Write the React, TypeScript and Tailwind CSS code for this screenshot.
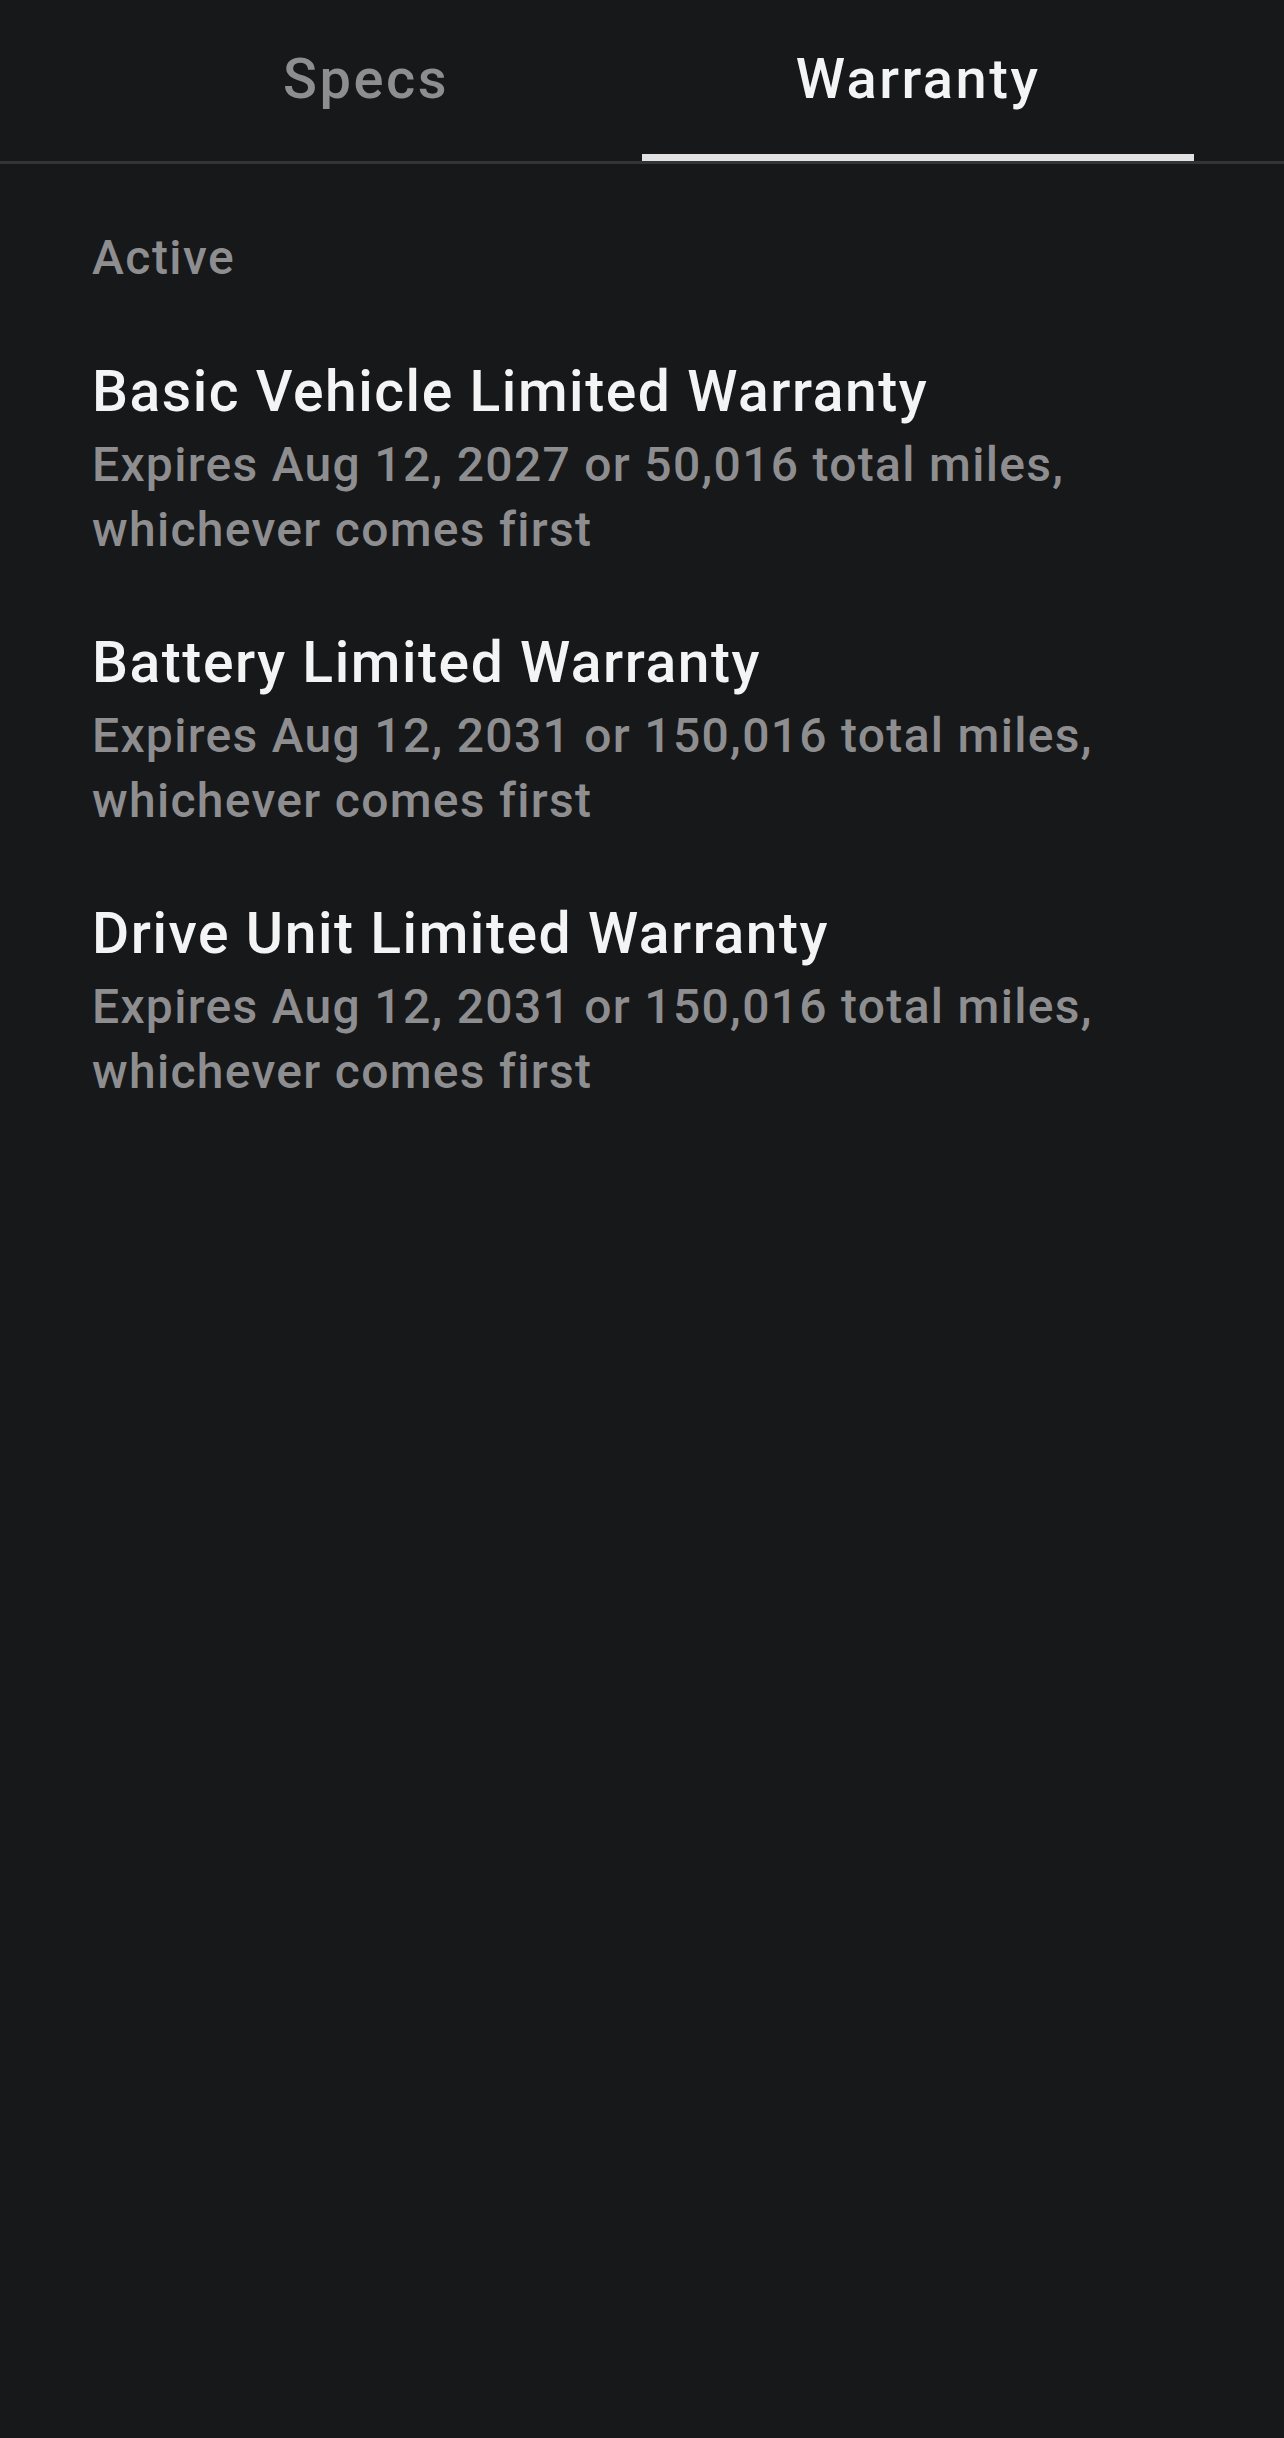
const warranties = [
  {
    title: 'Basic Vehicle Limited Warranty',
    detail: 'Expires Aug 12, 2027 or 50,016 total miles, whichever comes first',
  },
  {
    title: 'Battery Limited Warranty',
    detail: 'Expires Aug 12, 2031 or 150,016 total miles, whichever comes first',
  },
  {
    title: 'Drive Unit Limited Warranty',
    detail: 'Expires Aug 12, 2031 or 150,016 total miles, whichever comes first',
  },
];

function Tab({ label, active }: { label: string; active?: boolean }) {
  return (
    <div className="flex h-[161px] flex-1 flex-col items-center">
      <div
        className={
          'pt-[51px] text-[56px] leading-none font-medium tracking-[2.5px] ' +
          (active ? 'text-[#f4f4f5]' : 'text-[#8e8e90]')
        }
      >
        {label}
      </div>
      <div className="flex-1" />
      <div className={active ? 'h-[7px] w-full bg-[#e2e2e3]' : 'h-[7px] w-full'} />
    </div>
  );
}

export default function App() {
  return (
    <div
      className="min-h-[2438px] w-full bg-[#17181a]"
      style={{ fontFamily: 'Roboto, "Noto Sans", sans-serif' }}
    >
      <div className="border-b-[3px] border-[#333436]">
        <div className="flex px-[90px]">
          <Tab label="Specs" />
          <Tab label="Warranty" active />
        </div>
      </div>

      <div className="px-[92px] pt-[70px]">
        <p className="text-[48px] leading-none font-medium tracking-[1.5px] text-[#8e8e90]">Active</p>
        <div className="mt-[81px] flex flex-col gap-[72px]">
          {warranties.map((w) => (
            <div key={w.title}>
              <h3 className="text-[57px] leading-none font-medium tracking-[1.55px] text-[#f4f4f5]">
                {w.title}
              </h3>
              <p className="mt-[13px] max-w-[1100px] text-[48px] leading-[64.5px] font-medium tracking-[1.3px] text-[#8e8e90]">
                {w.detail}
              </p>
            </div>
          ))}
        </div>
      </div>
    </div>
  );
}
